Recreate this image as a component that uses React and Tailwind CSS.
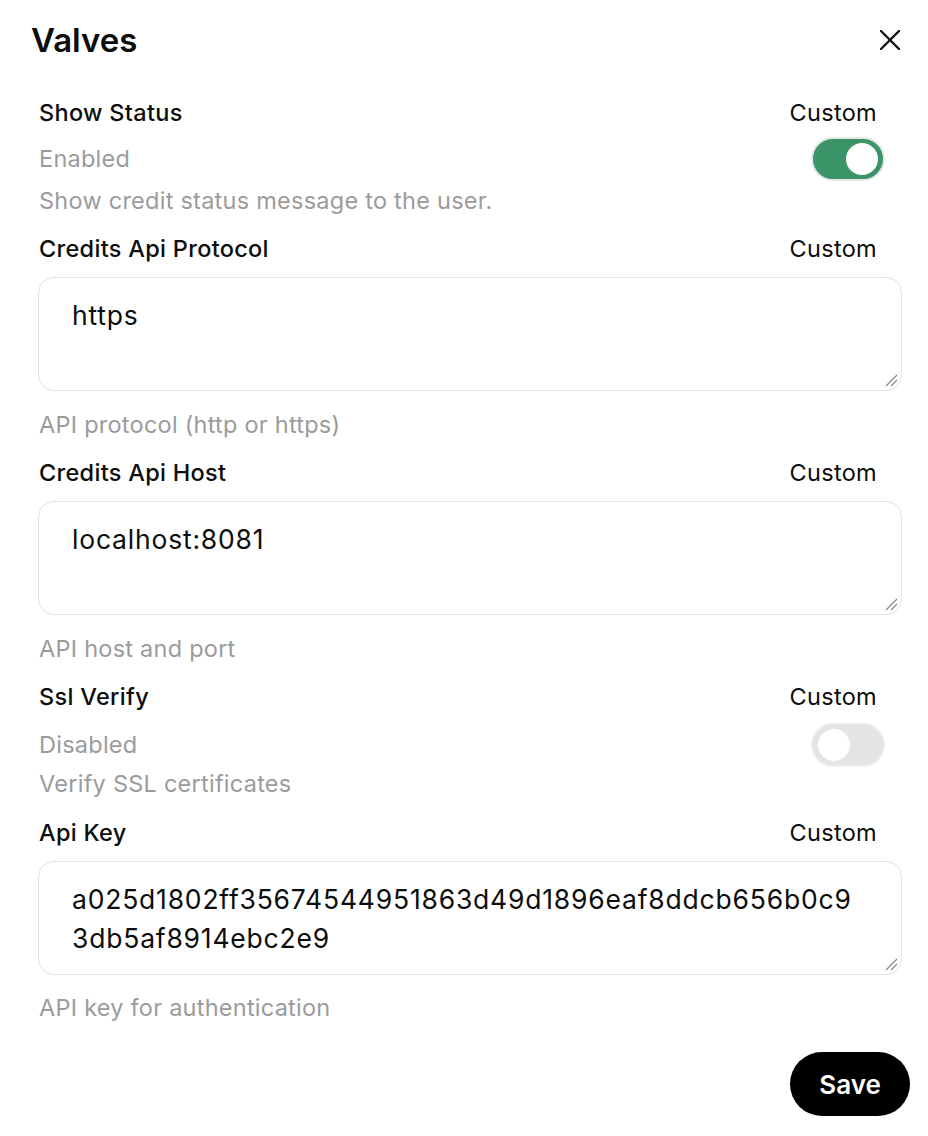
import React from "react";

function Toggle({ on }) {
  return (
    <div
      className={`w-[74px] h-[44px] rounded-full border-2 flex items-center px-[5px] ${
        on ? "bg-[#3a9468] border-[#e6e6e6] justify-end" : "bg-[#e4e4e4] border-[#ededed] justify-start"
      }`}
    >
      <div className="w-[32px] h-[32px] rounded-full bg-white" />
    </div>
  );
}

function LabelRow({ label }) {
  return (
    <div className="flex items-center justify-between h-[32px] pl-[1px] pr-[25px]">
      <span className="text-[23.5px] tracking-[0.3px] font-medium text-[#0d0d0d]">{label}</span>
      <span className="text-[23.5px] tracking-[0.3px] text-[#0d0d0d]">Custom</span>
    </div>
  );
}

function Desc({ children, className = "" }) {
  return (
    <div className={`h-[32px] leading-[32px] pl-[1px] text-[23.5px] tracking-[0.25px] text-[#9b9b9b] ${className}`}>
      {children}
    </div>
  );
}

function Box({ children }) {
  return (
    <div className="relative mt-[12px] h-[114px] rounded-[16px] border-[1.5px] border-[#e3e3e3] pl-[33px] pr-[30px] pt-[18px] text-[26.5px] tracking-[0.8px] leading-[39px] text-[#0d0d0d] whitespace-pre">
      {children}
      <svg className="absolute right-[3px] bottom-[3px]" width="14" height="14" viewBox="0 0 14 14">
        <line x1="2" y1="13" x2="13" y2="2" stroke="#8a8a8a" strokeWidth="1.3" />
        <line x1="7" y1="13" x2="13" y2="7" stroke="#8a8a8a" strokeWidth="1.3" />
      </svg>
    </div>
  );
}

export default function App() {
  return (
    <div className="w-[928px] min-h-[1136px] bg-white font-[Inter,sans-serif]">
      <div className="flex items-center justify-between h-[60px] pt-[20px] pl-[31px] pr-[28px]">
        <h1 className="text-[33px] leading-[40px] font-semibold text-[#0d0d0d]">Valves</h1>
        <svg width="20" height="20" viewBox="0 0 20 20">
          <line x1="1" y1="1" x2="19" y2="19" stroke="#111" strokeWidth="2.4" strokeLinecap="round" />
          <line x1="19" y1="1" x2="1" y2="19" stroke="#111" strokeWidth="2.4" strokeLinecap="round" />
        </svg>
      </div>

      <div className="pl-[38px] pr-[26px] pt-[37px]">
        <LabelRow label="Show Status" />
        <div className="mt-[8px] flex items-center justify-between h-[44px] pl-[1px] pr-[17px]">
          <span className="text-[23.5px] tracking-[0.25px] text-[#9b9b9b]">Enabled</span>
          <Toggle on />
        </div>
        <Desc className="mt-[4px]">Show credit status message to the user.</Desc>

        <div className="mt-[16px]">
          <LabelRow label="Credits Api Protocol" />
          <Box>https</Box>
          <Desc className="mt-[18px]">API protocol (http or https)</Desc>
        </div>

        <div className="mt-[16px]">
          <LabelRow label="Credits Api Host" />
          <Box>localhost:8081</Box>
          <Desc className="mt-[18px]">API host and port</Desc>
        </div>

        <div className="mt-[16px]">
          <LabelRow label="Ssl Verify" />
          <div className="mt-[10px] flex items-center justify-between h-[44px] pl-[1px] pr-[17px]">
            <span className="text-[23.5px] tracking-[0.25px] text-[#9b9b9b]">Disabled</span>
            <Toggle on={false} />
          </div>
          <Desc className="mt-[1px]">Verify SSL certificates</Desc>
        </div>

        <div className="mt-[17px]">
          <LabelRow label="Api Key" />
          <Box>{"a025d1802ff35674544951863d49d1896eaf8ddcb656b0c9\n3db5af8914ebc2e9"}</Box>
          <Desc className="mt-[17px]">API key for authentication</Desc>
        </div>
      </div>

      <div className="mt-[28px] flex justify-end pr-[18px] pb-[20px]">
        <button className="w-[120px] h-[64px] rounded-full bg-black text-white text-[26px] font-semibold">
          Save
        </button>
      </div>
    </div>
  );
}
